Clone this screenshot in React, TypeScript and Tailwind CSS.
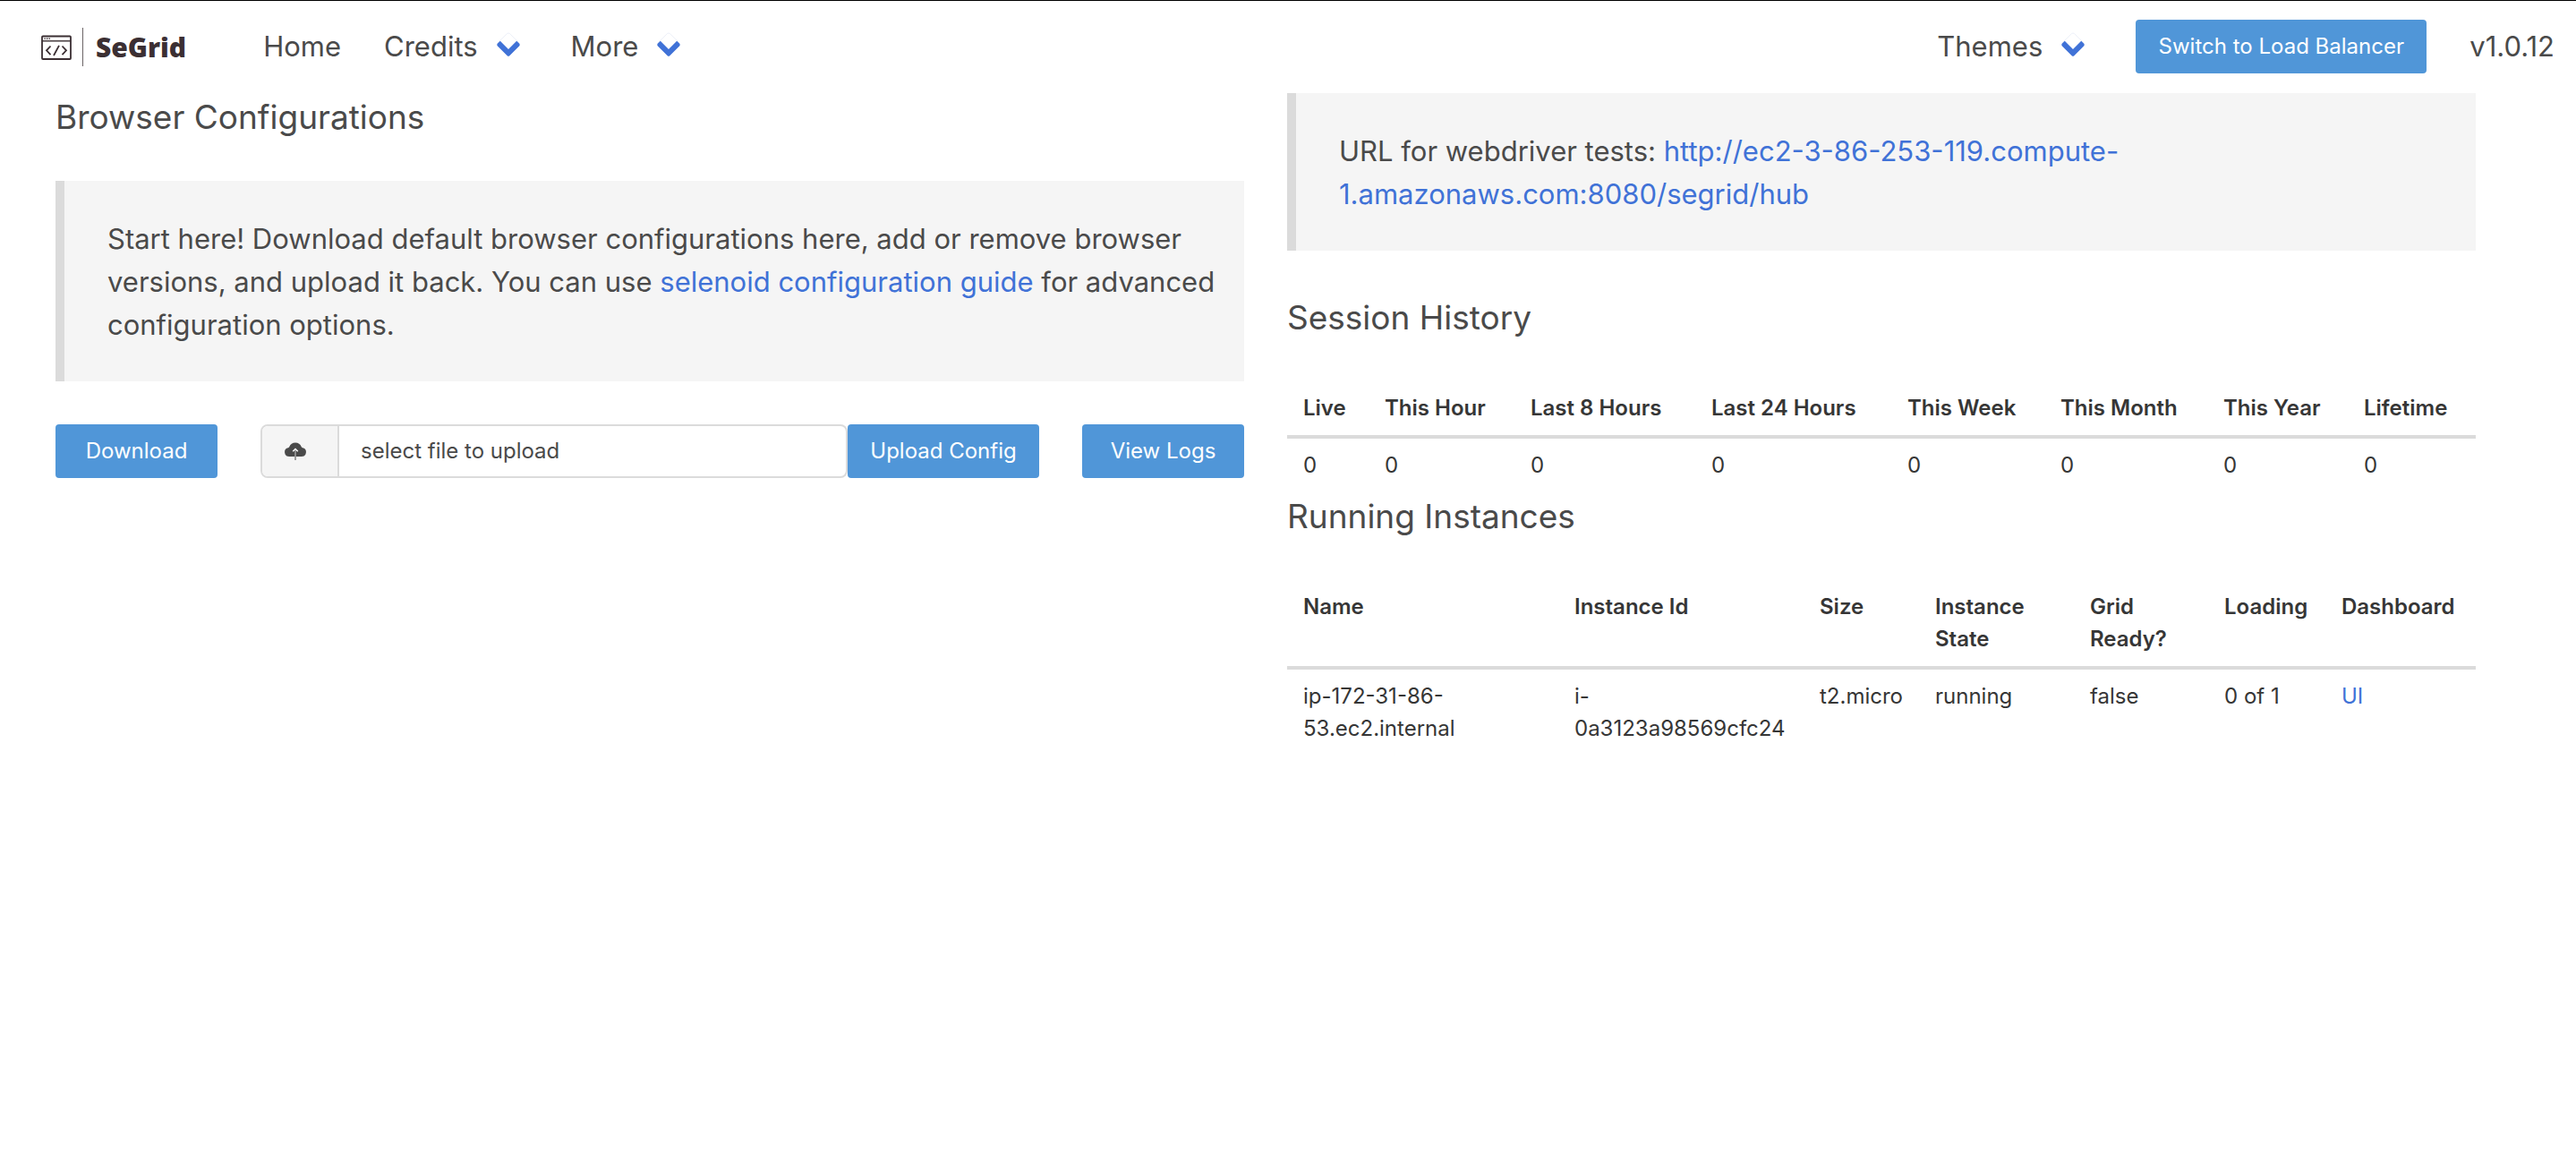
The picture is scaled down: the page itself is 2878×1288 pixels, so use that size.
import React from "react";

const sessionColumns = ["Live", "This Hour", "Last 8 Hours", "Last 24 Hours", "This Week", "This Month", "This Year", "Lifetime"];
const sessionWidths = ["w-[91px]", "w-[163px]", "w-[202px]", "w-[219px]", "w-[171px]", "w-[182px]", "w-[157px]", "w-[143px]"];
const instanceColumns = ["Name", "Instance Id", "Size", "Instance State", "Grid Ready?", "Loading", "Dashboard"];
const instanceWidths = ["w-[303px]", "w-[274px]", "w-[129px]", "w-[173px]", "w-[150px]", "w-[131px]", "w-[168px]"];

const buttonClass = "h-[60px] shrink-0 rounded bg-[#5096d8] text-center text-[24px] whitespace-nowrap text-white";

function Logo() {
  return (
    <svg viewBox="0 0 36 32" className="h-8 w-9" fill="none" stroke="#3b2f33" aria-hidden="true">
      <rect x="1" y="4.500" width="32" height="25.500" rx="1" strokeWidth="1.800" />
      <path d="M1 9.800h32" strokeWidth="1.400" />
      <path d="M3.500 7.200h1.300M6 7.200h1.300M8.500 7.200h1.300" strokeWidth="1.400" />
      <path d="M10.500 15.500 6 20.300 10.500 25.200M23.500 15.500 28 20.300 23.500 25.200M20 14.800 14 26" strokeWidth="1.800" />
    </svg>
  );
}

function NavMenu({ label }: { label: string }) {
  return (
    <button type="button" className="flex items-center gap-5 pr-8 pl-6">
      {label}
      <svg viewBox="0 0 28 28" className="mb-1 h-7 w-7" fill="none" aria-hidden="true">
        <path d="M1.500 12.500 12.500 1.500Q14 0.500 15.500 1.500L26.500 12.500" stroke="#e9ecf6" strokeWidth="0.800" />
        <path
          d="M4.800 9.800 14 19 23.200 9.800 26.300 12.700Q27.300 14 26.300 15.300L15.300 26.300Q14 27.300 12.700 26.300L1.700 15.300Q0.700 14 1.700 12.700Z"
          fill="#4072d7"
        />
      </svg>
    </button>
  );
}

function Heading({ children }: { children: React.ReactNode }) {
  return <h2 className="mb-[46px] pt-0.5 text-[37px] leading-[50px]">{children}</h2>;
}

function Note({ children }: { children: React.ReactNode }) {
  return (
    <blockquote className="mb-12 border-l-[10px] border-[#dbdbdb] bg-[#f5f5f5] pt-[41px] pr-6 pb-[39px] pl-12 text-[31px] leading-[48px]">
      {children}
    </blockquote>
  );
}

export default function App() {
  const th = "border-b-4 border-[#dbdbdb] px-[18px] py-3 text-left align-top font-semibold";
  const td = "px-[18px] py-3 align-top";
  return (
    <div className="min-h-screen border-t border-black bg-white font-['Inter',sans-serif] text-[#4a4a4a]">
      <nav className="flex h-[103px] items-center pb-px text-[31px]">
        <a href="#" className="flex items-center pr-[62px] pl-[46px]">
          <Logo />
          <span className="mx-[10px] h-[43px] w-px bg-[#6b6466]" />
          <span className="ml-1 font-['Noto_Sans',sans-serif] text-[30px] font-black text-[#3b2f33]">SeGrid</span>
        </a>
        <a href="#" className="px-6">Home</a>
        <NavMenu label="Credits" />
        <NavMenu label="More" />
        <div className="ml-auto flex items-center">
          <NavMenu label="Themes" />
          <button type="button" className={`${buttonClass} mx-6 w-[325px]`}>Switch to Load Balancer</button>
          <span className="px-6">v1.0.12</span>
        </div>
      </nav>
      <main className="mr-[112px] ml-[62px] grid grid-cols-2 gap-12">
        <section>
          <Heading>Browser Configurations</Heading>
          <Note>
            Start here! Download default browser configurations here, add or remove browser versions, and upload it
            back. You can use <a href="#" className="inline-block text-[#4072d7]">selenoid configuration guide</a> for advanced
            configuration options.
          </Note>
          <div className="flex gap-12">
            <button type="button" className={`${buttonClass} w-[181px]`}>Download</button>
            <div className="flex min-w-0 flex-1">
              <label className="relative flex h-[60px] min-w-0 flex-1 cursor-pointer overflow-hidden rounded-lg border-2 border-[#dbdbdb] text-[24px]">
                <input type="file" className="sr-only" />
                <span className="flex w-[86px] shrink-0 items-center border-r-2 border-[#dbdbdb] bg-[#f5f5f5] pl-[25px]">
                  <svg viewBox="0 0 24 24" className="h-6 w-6" aria-hidden="true">
                    <path d="M5 18A4.900 4.900 0 0 1 4 8.300C4.500 7.800 5 7.700 5.300 7A7.200 7.200 0 0 1 18.700 7C19 7.700 19.500 7.800 20 8.300A4.900 4.900 0 0 1 19 18Z" fill="#4a4a4a" />
                    <path d="M12 22V10.500" stroke="#949494" strokeWidth="1.800" />
                    <path d="M9.200 12.200 12 9.500 14.800 12.200" stroke="#ffffff" strokeWidth="1.400" fill="none" />
                  </svg>
                </span>
                <span className="flex items-center px-6">select file to upload</span>
              </label>
              <button type="button" className={`${buttonClass} w-[214px]`}>Upload Config</button>
            </div>
            <button type="button" className={`${buttonClass} w-[181px]`}>View Logs</button>
          </div>
        </section>
        <section>
          <Note>
            URL for webdriver tests:{" "}
            <a href="#" className="text-[#4072d7]">http://ec2-3-86-253-119.compute-<br />1.amazonaws.com:8080/segrid/hub</a>
          </Note>
          <Heading>Session History</Heading>
          <table className="w-full table-fixed text-[24px] leading-9 text-[#363636]">
            <colgroup>{sessionWidths.map((w, i) => <col key={i} className={w} />)}</colgroup>
            <thead>
              <tr>{sessionColumns.map((c) => <th key={c} scope="col" className={`${th} whitespace-nowrap`}>{c}</th>)}</tr>
            </thead>
            <tbody>
              <tr>{sessionColumns.map((c) => <td key={c} className={td}>0</td>)}</tr>
            </tbody>
          </table>
          <Heading>Running Instances</Heading>
          <table className="w-full table-fixed text-[24px] leading-9 text-[#363636]">
            <colgroup>{instanceWidths.map((w, i) => <col key={i} className={w} />)}</colgroup>
            <thead>
              <tr>{instanceColumns.map((c) => <th key={c} scope="col" className={th}>{c}</th>)}</tr>
            </thead>
            <tbody>
              <tr>
                <td className={td}>ip-172-31-86-<br />53.ec2.internal</td>
                <td className={td}>i-<br />0a3123a98569cfc24</td>
                <td className={td}>t2.micro</td>
                <td className={td}>running</td>
                <td className={td}>false</td>
                <td className={td}>0 of 1</td>
                <td className={td}><a href="#" className="text-[#4072d7]">UI</a></td>
              </tr>
            </tbody>
          </table>
        </section>
      </main>
    </div>
  );
}
